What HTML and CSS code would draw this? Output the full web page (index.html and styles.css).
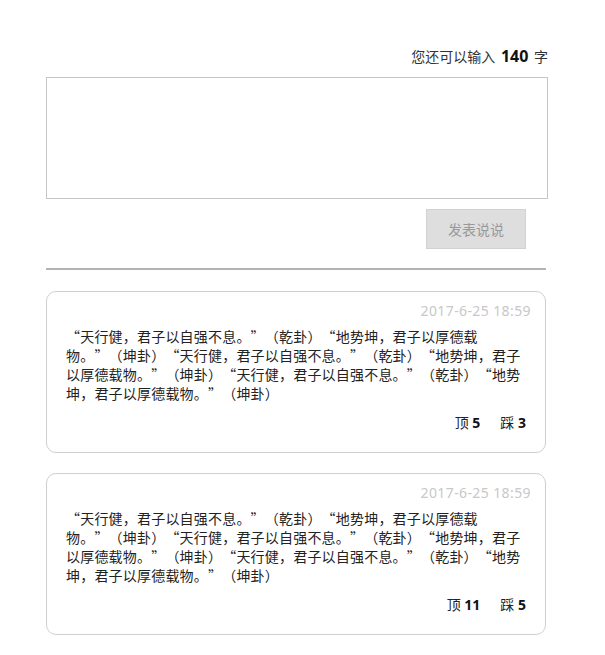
FILE: index.html
```html
<!DOCTYPE html>
<html lang="zh-CN">
<head>
<meta charset="utf-8">
<title>说说</title>
<link rel="stylesheet" href="styles.css">
</head>
<body>
<div class="page">
  <div class="counter">您还可以输入 <b class="count">140</b> 字</div>
  <textarea class="editor"></textarea>
  <div class="actions"><button class="submit" type="button">发表说说</button></div>
  <div class="divider"></div>
  <div class="list">
    <div class="card">
      <div class="date">2017-6-25 18:59</div>
      <p class="content">“天行健，君子以自强不息。”&#8288;（乾卦）&#8288;“地势坤，君子以厚德载物。”&#8288;（坤卦）&#8288;“天行健，君子以自强不息。”&#8288;（乾卦）&#8288;“地势坤，君子以厚德载物。”&#8288;（坤卦）&#8288;“天行健，君子以自强不息。”&#8288;（乾卦）&#8288;“地势坤，君子以厚德载物。”&#8288;（坤卦）</p>
      <div class="votes"><span class="vote">顶 <b>5</b></span><span class="vote">踩 <b>3</b></span></div>
    </div>
    <div class="card">
      <div class="date">2017-6-25 18:59</div>
      <p class="content">“天行健，君子以自强不息。”&#8288;（乾卦）&#8288;“地势坤，君子以厚德载物。”&#8288;（坤卦）&#8288;“天行健，君子以自强不息。”&#8288;（乾卦）&#8288;“地势坤，君子以厚德载物。”&#8288;（坤卦）&#8288;“天行健，君子以自强不息。”&#8288;（乾卦）&#8288;“地势坤，君子以厚德载物。”&#8288;（坤卦）</p>
      <div class="votes"><span class="vote">顶 <b>11</b></span><span class="vote">踩 <b>5</b></span></div>
    </div>
  </div>
</div>
</body>
</html>
```
FILE: styles.css
```css
html, body {
  margin: 0;
  padding: 0;
  background: #fff;
}
body {
  font-family: "Noto Sans", "Noto Sans CJK SC", sans-serif;
  font-size: 14px;
  color: #222;
}
.page {
  width: 502px;
  margin-left: 46px;
  padding-top: 46px;
}
.counter {
  text-align: right;
  line-height: 20px;
  color: #333;
}
.count {
  font-size: 16px;
  font-weight: bold;
  color: #111;
  margin: 0 2px;
}
.editor {
  display: block;
  box-sizing: border-box;
  width: 502px;
  height: 122px;
  margin-top: 10px;
  border: 1px solid #c6c6c6;
  resize: none;
  outline: none;
  padding: 4px;
  font: inherit;
}
.actions {
  display: flex;
  justify-content: flex-end;
  padding-right: 22px;
  margin-top: 10px;
}
.submit {
  width: 100px;
  height: 40px;
  background: #dedede;
  border: 1px solid #d2d2d2;
  color: #999;
  font-family: "Noto Sans CJK SC", sans-serif;
  font-size: 14px;
  padding: 0;
}
.divider {
  width: 500px;
  height: 2px;
  background: #b4b4b4;
  margin-top: 19px;
}
.list {
  display: flex;
  flex-direction: column;
  gap: 20px;
  margin-top: 21px;
}
.card {
  width: 500px;
  box-sizing: border-box;
  border: 1px solid #cfcfcf;
  border-radius: 10px;
  padding: 9px 14px 19px 19px;
}
.date {
  text-align: right;
  line-height: 20px;
  color: #c8c8c8;
  letter-spacing: 0.4px;
}
.content {
  margin: 6px 6px 0 0;
  line-height: 19px;
  color: #222;
  font-family: "Noto Sans CJK SC", sans-serif;
  text-spacing-trim: space-all;
  letter-spacing: 0.2px;
}
.votes {
  display: flex;
  justify-content: flex-end;
  gap: 20px;
  margin-top: 10px;
  padding-right: 5px;
  line-height: 20px;
  color: #222;
}
.votes b {
  color: #111;
}
```
